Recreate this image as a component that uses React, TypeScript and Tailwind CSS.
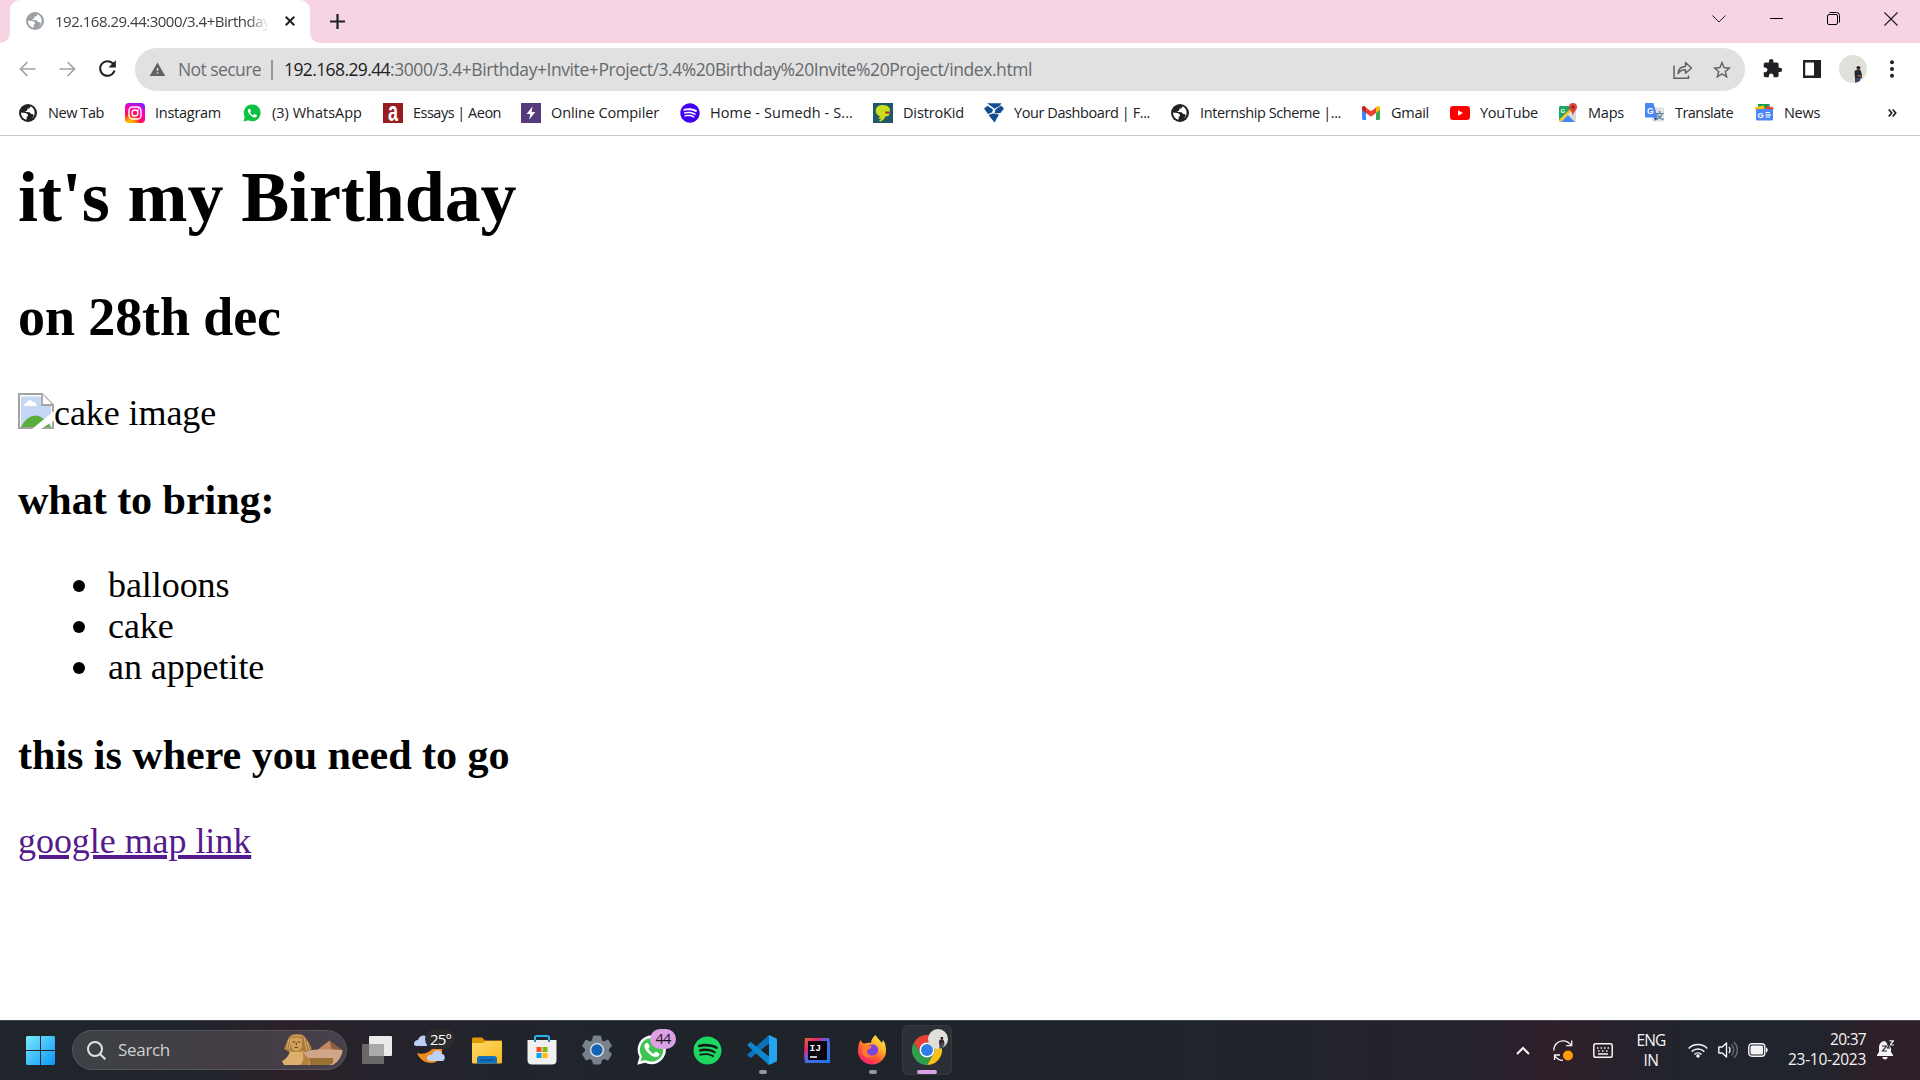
import { useLayoutEffect, useRef, useState, type ReactNode } from "react";
import { MdExtension, MdRefresh, MdStarBorder, MdWarning } from "react-icons/md";
import { FaSpotify } from "react-icons/fa";

/* Text whose letter spacing is tuned so that it fills a given width. */
function FitText({ children, width, className = "" }: { children: string; width: number; className?: string }) {
  const ref = useRef<HTMLSpanElement>(null);
  const [spacing, setSpacing] = useState(0);
  useLayoutEffect(() => {
    const el = ref.current;
    if (!el) return;
    el.style.letterSpacing = "0px";
    const natural = el.getBoundingClientRect().width;
    setSpacing((width - natural) / children.length);
  }, [children, width]);
  return (
    <span ref={ref} className={"inline-block whitespace-pre " + className} style={{ letterSpacing: spacing + "px" }}>
      {children}
    </span>
  );
}

function Globe({ color }: { color: string }) {
  return (
    <svg width="18" height="18" viewBox="0 0 18 18">
      <circle cx="9" cy="9" r="9" fill={color} />
      <path
        d="M11.2 2.3c.3 1.3-.5 2.2-1.7 2.3-.9 0-1.2.5-1.2 1.2 0 .9-.5 1.2-1.4 1.3-.5 0-.7.6-.2.9.8.2 2.9 0 3.8.3 1.2.4 1 1.5 1.9 1.8.9.3 2.1-.1 2.2.9.1 1-.8 2.7-1.9 3.7a7 7 0 0 0 2.9-5.9A7 7 0 0 0 11.2 2.3z"
        fill="#fff"
      />
      <path d="M2 8.6c1.6.3 3.900.3 5.100.7 1.300.5 2.100 1.200 1.900 2.200-.2.900-1.200.9-1.300 1.800-.1.900.2 1.600-.4 2.400C4.100 15 1.900 12 2 8.600z" fill="#fff" />
    </svg>
  );
}

function InstagramIcon() {
  return (
    <svg width="20" height="20" viewBox="0 0 20 20">
      <defs>
        <radialGradient id="ig" cx=".25" cy="1.05" r="1.15">
          <stop offset="0" stopColor="#ffd600" />
          <stop offset=".22" stopColor="#ff9b00" />
          <stop offset=".45" stopColor="#ff0f55" />
          <stop offset=".72" stopColor="#ff00b4" />
          <stop offset="1" stopColor="#8a1cff" />
        </radialGradient>
      </defs>
      <rect width="20" height="20" rx="4" fill="url(#ig)" />
      <g fill="none" stroke="#fff" strokeWidth="1.400">
        <rect x="4" y="4" width="12" height="12" rx="3.600" />
        <circle cx="10" cy="10" r="3" />
      </g>
      <circle cx="13.500" cy="6.500" r=".9" fill="#fff" />
    </svg>
  );
}

const PHONE =
  "M6.200 4.700c-.4 0-1.300.5-1.400 1.900 0 1.400.9 2.800 2.200 4.200 1.500 1.600 3.300 2.600 4.900 2.600 1.300-.1 2.100-1 2.100-1.900 0-.4-2-1.500-2.400-1.400-.4 0-.9 1.200-1.300 1.200-.7-.1-3-2.200-3.100-2.900 0-.4.8-.9.800-1.300 0-.5-.8-2.400-1.800-2.400z";

function WhatsAppIcon() {
  return (
    <svg width="18" height="18" viewBox="0 0 18 18">
      <path d="M9.100.4a8.400 8.400 0 0 0-7.300 12.500L.5 17.600l4.900-1.300A8.400 8.400 0 1 0 9.100.4z" fill="#0cc143" />
      <path d={PHONE} fill="#fff" />
    </svg>
  );
}

function AeonIcon() {
  return (
    <svg width="20" height="20" viewBox="0 0 20 20" overflow="visible">
      <rect width="20" height="20" fill="#971d23" />
      <text
        x="5"
        y="17.500"
        fontSize="27"
        fontWeight="700"
        fill="#fff"
        fontFamily="Liberation Sans, sans-serif"
        textLength="10"
        lengthAdjust="spacingAndGlyphs"
      >
        a
      </text>
    </svg>
  );
}

function CompilerIcon() {
  return (
    <svg width="20" height="20" viewBox="0 0 20 20">
      <rect width="20" height="20" fill="#553b7c" />
      <path d="M11.500 3.500 5.500 11h3.700l-1 5.800 6.100-7.900h-3.600z" fill="#fff" />
    </svg>
  );
}

function DistroIcon() {
  return (
    <svg width="20" height="20" viewBox="0 0 20 20">
      <rect width="20" height="20" fill="#22566a" />
      <path d="M2.800 6.500C3.600 3 7 1.700 10.500 2c4 .2 6.600 2.500 6.500 5.500l-.8 4.500c-.8 1.500-2.500 1.500-4 1.500l-1 2.500-3.200 2.500-2-.5 2.200-2.500-2.900.3 1.500-2.300L4 11.500C2.800 10 2.500 8 2.800 6.500z" fill="#c9de1c" />
      <path d="M12 8.500h4.500v2h-4z" fill="#b5242c" />
    </svg>
  );
}

function DashboardIcon() {
  return (
    <svg width="20" height="20" viewBox="0 0 20 20" fill="#134f8f">
      <path d="M3 .3h14.500L15.500 3 10.500 5.800 6.500 2.800z" />
      <path d="M0 5.500 3.500 2.800 9 6.500 8 9.500 4 11z" />
      <path d="M11.500 6.500 17 2.500l3 3-3.500 4.500-6 .5z" />
      <path d="M4.500 12 9 10.500l6 1L10.500 19.500z" />
    </svg>
  );
}

function GmailIcon() {
  return (
    <svg width="18" height="14" viewBox="0 0 18 14">
      <path d="M0 2.200V12.800c0 .7.500 1.200 1.200 1.200H4V6z" fill="#4285f4" />
      <path d="M18 2.200V12.800c0 .7-.5 1.200-1.200 1.200H14V6z" fill="#34a853" />
      <path d="M14 1.600V7l4-3V2c0-1.900-2-2.400-3.200-1.400z" fill="#fbbc04" />
      <path d="M4 7V1.600l5 3.700 5-3.700V7l-5 3.800z" fill="#ea4335" />
      <path d="M0 2v2l4 3V1.600L3.200.6C2-.4 0 .1 0 2z" fill="#c5221f" />
    </svg>
  );
}

function YouTubeIcon() {
  return (
    <svg width="20" height="14" viewBox="0 0 20 14">
      <rect width="20" height="14" rx="3.200" fill="#f00" />
      <path d="M8 4.200v5.600L13 7z" fill="#fff" />
    </svg>
  );
}

function MapsIcon() {
  return (
    <svg width="18" height="20" viewBox="0 0 18 20">
      <rect x="0" y="3" width="17" height="16" rx="1.500" fill="#e6e6e6" />
      <path d="M0 17V4.500C0 3.700.7 3 1.500 3H15L0 17.500z" fill="#1fa463" />
      <path d="M2 19 9 12l7 7z" fill="#4285f4" />
      <path d="M0 17 14 3l2.500 1L1.500 19C.5 19 0 18 0 17z" fill="#f7c52b" />
      <path d="M9.500 12.500 16.500 19c.5-.4.5-1 .5-1.500V6z" fill="#d9d9d9" />
      <text x="1.500" y="9.500" fontSize="6" fontWeight="700" fill="#fff" fontFamily="Liberation Sans, sans-serif">G</text>
      <path d="M14 0a4 4 0 0 0-4 4c0 3.500 3.400 4 4 9 .6-5 4-5.500 4-9a4 4 0 0 0-4-4z" fill="#e04538" />
      <circle cx="14" cy="4" r="1.500" fill="#8c1d18" />
    </svg>
  );
}

function TranslateIcon() {
  return (
    <svg width="20" height="19" viewBox="0 0 20 19">
      <rect x="7" y="4.500" width="12" height="14" rx="1" fill="#dfe1e5" />
      <text x="10" y="15.500" fontSize="9" fontWeight="700" fill="#5f7f95" fontFamily="Noto Sans CJK SC, sans-serif">文</text>
      <path d="M1 0h7.500l4 14.500H1c-.6 0-1-.4-1-1V1c0-.6.4-1 1-1z" fill="#4a87f2" />
      <path d="M9 14.500h3.500L9.800 18z" fill="#2a56c6" />
      <text x="2" y="10.500" fontSize="8.500" fontWeight="700" fill="#fff" fontFamily="Liberation Sans, sans-serif">G</text>
    </svg>
  );
}

function NewsIcon() {
  return (
    <svg width="19" height="17" viewBox="0 0 19 17">
      <path d="M3 0h11.500v6H3z" fill="#0c9d58" />
      <path d="m0 3 9-1.500 1 6L1 9z" fill="#ffc107" />
      <path d="m18.500 3.500-7-1.800-1.500 6L17.500 10z" fill="#ea4335" />
      <rect x="1" y="5" width="17" height="11.500" rx="1.200" fill="#4a87f2" />
      <text x="2.500" y="14" fontSize="8" fontWeight="700" fill="#fff" fontFamily="Liberation Sans, sans-serif">G</text>
      <path d="M10.500 8.500H15M10.500 10.800H16M10.500 13H15" stroke="#fff" strokeWidth="1.200" />
    </svg>
  );
}

type Bookmark = { label: string; slot: string; width: number; icon: ReactNode };

const bookmarks: Bookmark[] = [
  { label: "New Tab", slot: "w-[107px]", width: 56, icon: <Globe color="#202124" /> },
  { label: "Instagram", slot: "w-[117px]", width: 66, icon: <InstagramIcon /> },
  { label: "(3) WhatsApp", slot: "w-[141px]", width: 90, icon: <WhatsAppIcon /> },
  { label: "Essays | Aeon", slot: "w-[138px]", width: 88, icon: <AeonIcon /> },
  { label: "Online Compiler", slot: "w-[159px]", width: 108, icon: <CompilerIcon /> },
  { label: "Home - Sumedh - S...", slot: "w-[193px]", width: 143, icon: <FaSpotify size={20} color="#4100f5" /> },
  { label: "DistroKid", slot: "w-[111px]", width: 61, icon: <DistroIcon /> },
  { label: "Your Dashboard | F...", slot: "w-[186px]", width: 136, icon: <DashboardIcon /> },
  { label: "Internship Scheme |...", slot: "w-[191px]", width: 141, icon: <Globe color="#202124" /> },
  { label: "Gmail", slot: "w-[89px]", width: 38, icon: <GmailIcon /> },
  { label: "YouTube", slot: "w-[108px]", width: 58, icon: <YouTubeIcon /> },
  { label: "Maps", slot: "w-[87px]", width: 36, icon: <MapsIcon /> },
  { label: "Translate", slot: "w-[109px]", width: 58, icon: <TranslateIcon /> },
  { label: "News", slot: "w-[80px]", width: 36, icon: <NewsIcon /> },
];

function TabStrip() {
  return (
    <div className="flex h-[43px] bg-[#f6d4e3]">
      <div className="flex w-2.5 items-end bg-white">
        <div className="h-full w-full rounded-br-[10px] bg-[#f6d4e3]" />
      </div>
      <div className="bg-[#f6d4e3]">
        <div className="flex h-[43px] w-[300px] items-center rounded-t-[10px] bg-white pb-[2px] pl-4">
          <Globe color="#9aa0a6" />
          <div className="ml-[11px] w-[216px] [mask-image:linear-gradient(90deg,#000_192px,transparent_214px)]">
            <FitText width={215} className="text-[15px] leading-5 text-[#3c4043]">
              192.168.29.44:3000/3.4+Birthday
            </FitText>
          </div>
          <svg className="ml-3.5" width="10" height="10" viewBox="0 0 10 10" stroke="#202124" strokeWidth="2">
            <path d="M.7.700l8.600 8.600M9.300.7.7 9.300" />
          </svg>
        </div>
      </div>
      <div className="flex w-2.5 items-end bg-white">
        <div className="h-full w-full rounded-bl-[10px] bg-[#f6d4e3]" />
      </div>
      <svg className="mt-3.5 ml-2.5" width="15" height="15" viewBox="0 0 15 15" stroke="#202124" strokeWidth="2.200">
        <path d="M7.500 0v15M0 7.500h15" />
      </svg>
      <div className="mr-[22px] ml-auto flex h-[37px] items-center gap-11">
        <svg width="14" height="13" viewBox="0 0 14 13" fill="none" stroke="#202124">
          <path d="m.5 3.500 6.500 6.500 6.500-6.500" />
        </svg>
        <svg width="13" height="13" viewBox="0 0 13 13" fill="none" stroke="#000">
          <path d="M0 6.500h13" />
        </svg>
        <svg width="13" height="13" viewBox="0 0 13 13" fill="none" stroke="#000">
          <rect x=".5" y="2.500" width="10" height="10" rx="1.500" />
          <path d="M2.500.500h7a3 3 0 0 1 3 3v7" />
        </svg>
        <svg width="14" height="14" viewBox="0 0 14 14" fill="none" stroke="#202124" strokeWidth="1.200">
          <path d="m.5.500 13 13M13.500.500l-13 13" />
        </svg>
      </div>
    </div>
  );
}

function Avatar({ className }: { className: string }) {
  return (
    <svg className={className} viewBox="0 0 28 28">
      <circle cx="14" cy="14" r="14" fill="#e0e0da" />
      <path d="M15.500 16.500c.5-2 5.500-2.500 6.500-.5l1 4-.5 3.500h-6.500z" fill="#2b2632" />
      <circle cx="19.500" cy="13.500" r="1.800" fill="#5b3a30" />
      <path d="M17.300 13c.3-2.500 4-2.500 4.300 0z" fill="#17151a" />
      <path d="m18.500 20 4 .5-1 1.300-3-.5z" fill="#a36d5a" />
      <path d="M16 23h5.500l-.5 2.800-2 1.200-3 .7z" fill="#3a4664" />
    </svg>
  );
}

function Toolbar() {
  return (
    <div className="flex h-[53px] items-center bg-white">
      <svg className="mb-0.5 ml-[19px]" width="17" height="16" viewBox="0 0 17 16" fill="none" stroke="#a2a2a2" strokeWidth="1.700">
        <path d="M16.500 8H1.500M8.500 1l-7 7 7 7" />
      </svg>
      <svg className="mb-0.5 ml-[23px]" width="17" height="16" viewBox="0 0 17 16" fill="none" stroke="#a2a2a2" strokeWidth="1.700">
        <path d="M.5 8h15M8.500 1l7 7-7 7" />
      </svg>
      <MdRefresh className="mb-0.5 ml-[19px] text-[#202124]" size={25} />
      <div className="ml-[15px] flex h-[43px] w-[1610px] items-center rounded-full bg-[#e1e1e1] text-[17.500px]">
        <MdWarning className="ml-3.5 text-[#5f6368]" size={17} />
        <FitText width={83} className="ml-3 text-[#6b6e72]">Not secure</FitText>
        <div className="ml-2.5 h-5 w-0.5 bg-[#96999c]" />
        <FitText width={106} className="ml-[11px] text-[#202124]">192.168.29.44</FitText>
        <FitText width={642} className="text-[#666a6e]">
          :3000/3.4+Birthday+Invite+Project/3.4%20Birthday%20Invite%20Project/index.html
        </FitText>
        <svg className="ml-auto" width="20" height="18" viewBox="0 0 20 18" fill="none" stroke="#5f6368" strokeWidth="1.500">
          <path d="M1 4.500v12.700h14.500V14.500" />
          <path d="M5 12.500c.3-4 2.700-6.800 7.500-7V1.500l6 5.500-6 5.300V8.700c-3.500 0-5.500 1-7.500 3.800z" strokeLinejoin="round" />
        </svg>
        <MdStarBorder className="mr-3 ml-[18px] text-[#5f6368]" size={22} />
      </div>
      <MdExtension className="mb-0.5 ml-[17px] text-[#202124]" size={21} />
      <svg className="mb-0.5 ml-5" width="18" height="18" viewBox="0 0 18 18">
        <path fillRule="evenodd" d="M0 0h18v18H0zM2.200 2.500v13h8.800v-13z" fill="#202124" />
      </svg>
      <Avatar className="mb-0.5 ml-[18px] h-7 w-7" />
      <svg className="mb-0.5 ml-[22px]" width="6" height="18" viewBox="0 0 6 18" fill="#202124">
        <circle cx="3" cy="2.300" r="2" />
        <circle cx="3" cy="9" r="2" />
        <circle cx="3" cy="15.700" r="2" />
      </svg>
    </div>
  );
}

function BookmarksBar() {
  return (
    <div className="flex h-10 items-center border-b border-[#c9c9c9] bg-white pb-1.5 pl-[18px] text-[14.500px] text-[#202124]">
      {bookmarks.map((b) => (
        <div key={b.label} className={"flex shrink-0 items-center " + b.slot}>
          <span className="mr-2.5 flex w-5 shrink-0 justify-center">{b.icon}</span>
          <FitText width={b.width}>{b.label}</FitText>
        </div>
      ))}
      <svg className="mr-[23px] ml-auto" width="9" height="8" viewBox="0 0 9 8" fill="none" stroke="#202124" strokeWidth="1.700">
        <path d="m.7.500 3 3.500-3 3.500M4.700.500l3 3.500-3 3.500" />
      </svg>
    </div>
  );
}

function BrokenImage() {
  return (
    <svg width="36" height="36" viewBox="0 0 36 36">
      <path d="M1 1h23l11 11V35H1z" fill="#fff" stroke="#a3a3a3" strokeWidth="2" />
      <path d="M3 3.500h20.500v9.500H33V34H3z" fill="#c5d7f4" />
      <path d="M6 13c-.5-2 1-3 2.500-3 .5-3 5-4 6.500-1 2.500-.5 4 1.500 3.500 4z" fill="#fff" />
      <path d="M3 34C7 26 13 22.500 17.500 22.500S27 26 33 34z" fill="#5bad3b" />
      <path d="M24 1v11h11" fill="#fff" stroke="#a3a3a3" strokeWidth="1.800" />
      <path d="M36 18v9.500L23 36H14z" fill="#fff" />
    </svg>
  );
}

function Bullet({ children }: { children: ReactNode }) {
  return (
    <li className="flex items-center">
      <span className="mr-[23px] h-3 w-3 rounded-full bg-black" />
      {children}
    </li>
  );
}

function Page() {
  return (
    <main className="h-[884px] bg-white pt-5 pl-[18px] font-['Liberation_Serif','Times_New_Roman',serif] text-[36px] leading-[41px] text-black">
      <h1 className="text-[72px] leading-[82px] font-bold tracking-[-0.1px]">it's my Birthday</h1>
      <h2 className="mt-[48px] text-[54px] leading-[62px] font-bold tracking-[-0.1px]">on 28th dec</h2>
      <div className="mt-[45px] flex h-[41px]">
        <BrokenImage />
        <span className="tracking-[-0.08px]">cake image</span>
      </div>
      <h3 className="mt-[42px] text-[42.120px] leading-[48px] font-bold tracking-[-0.06px]">what to bring:</h3>
      <ul className="mt-[41px] pl-[55px] tracking-[-0.06px]">
        <Bullet>balloons</Bullet>
        <Bullet>cake</Bullet>
        <Bullet>an appetite</Bullet>
      </ul>
      <h3 className="mt-[43px] text-[42.120px] leading-[48px] font-bold tracking-[-0.05px]">this is where you need to go</h3>
      <p className="mt-[42px] tracking-[-0.05px] text-[#551a8b]">
        <span className="underline decoration-[3.500px] underline-offset-[2px]">google map link</span>
      </p>
    </main>
  );
}

function Sphinx() {
  return (
    <svg width="61" height="32" viewBox="0 0 61 32">
      <path d="M34 17 47.500 6.500 61 17z" fill="#c08a5e" />
      <path d="M47.500 6.500 61 17H50z" fill="#8f5d40" />
      <path d="M22 17c12-2 26-2 38.500-1-.5 6-4 12-10 15H20z" fill="#cfa688" />
      <path d="M18 24h33v5l-4 2H16z" fill="#9c7033" />
      <path d="M9 1c5-1.800 11-1.200 13.500 1.500C26 6 28 11 30 15l-6 3H7l-5-3C4 11 5 4 9 1z" fill="#a87a3c" />
      <path d="M22 3l3 14M25 7l2.500 9M7 5 4.500 15M9 3 7 16M10 1.800h11" stroke="#dcb06c" strokeWidth="1" fill="none" />
      <path d="M9 5c2-2 9-2 11 0v6c0 4-3 6.500-5.500 6.500S9 15 9 11z" fill="#d2a059" />
      <path d="M10.500 8h2.700M15.700 8h2.700M12.700 13.500h3.400M14.300 8.500v2.700" stroke="#65431f" strokeWidth="1" />
      <path d="M8 16.500c2 2 10 2 13 0 1 4 5 6 7 9.500v5H2l-2-4c4-2 7-5 8-10.500z" fill="#dcb06c" />
      <path d="M20 17c2 4 6 5 8 9l-1 5h-9c4-4 4-9 2-14z" fill="#b5853f" />
    </svg>
  );
}

function Weather() {
  return (
    <div className="relative flex h-10 w-10 items-end">
      <svg width="40" height="40" viewBox="0 0 40 40">
        <path d="M5 23c5 2 12 0 15-4l10-1c1 8-3 15-11 15-6 0-12-4-14-10z" fill="#f08a1d" />
        <path d="M2 14c0-3 2-4 4-4 1-5 8-6 9-2v8H4c-1 0-2-1-2-2z" fill="#b9cdf5" />
        <path d="M15 28c0-3 3-4 5-3 1-6 9-6 10-1 3 0 4 5 1 7H18c-2 0-3-1-3-3z" fill="#bcd0f8" />
      </svg>
      <span className="absolute -top-px left-[13px] flex h-5 w-[30px] items-center justify-center rounded-full bg-[#2b2b2d] pl-px text-[15px] text-white">
        <FitText width={21}>25°</FitText>
      </span>
    </div>
  );
}

function Explorer() {
  return (
    <svg width="30" height="27" viewBox="0 0 30 27">
      <defs>
        <linearGradient id="fold" x1="0" y1="0" x2="1" y2="1">
          <stop offset="0" stopColor="#ffd869" />
          <stop offset="1" stopColor="#f9b91c" />
        </linearGradient>
      </defs>
      <path d="M0 2c0-1 .8-1.500 1.500-1.500H10l3 3h17V8H0z" fill="#dd9a05" />
      <path d="M0 6h11l3-2h14.500c1 0 1.500.7 1.500 1.500V25c0 1-.7 1.500-1.500 1.500h-27C.6 26.500 0 26 0 25z" fill="url(#fold)" />
      <path d="M5 26.500V22c0-2 1-3 3-3h14c2 0 3 1 3 3v4.500z" fill="#1272bd" />
      <path d="M8.500 23h13" stroke="#0a4a86" strokeWidth="1.200" />
    </svg>
  );
}

function Store() {
  return (
    <svg width="30" height="30" viewBox="0 0 30 30">
      <path d="M8 7V2.500C8 1.500 8.700 1 9.500 1h11c.9 0 1.500.6 1.500 1.500V7" fill="none" stroke="#28b5ec" strokeWidth="2" />
      <path d="M.5 5h29v20c0 3-1.500 4.500-4.500 4.500H5C2 29.500.5 28 .5 25z" fill="#f0f0f1" />
      <path d="M8 5v2M22 5v2" stroke="#1d86c2" strokeWidth="2" />
      <path d="M9.500 12h5v5h-5z" fill="#f25022" />
      <path d="M15.500 12h5v5h-5z" fill="#7fba00" />
      <path d="M9.500 18h5v5h-5z" fill="#00a4ef" />
      <path d="M15.500 18h5v5h-5z" fill="#ffb900" />
    </svg>
  );
}

function Settings() {
  return (
    <svg width="30" height="30" viewBox="0 0 30 30">
      <path d="M11.500 1h7l1 4.500 2.500 1.500L26 5l3.500 6-3 3v2l3 3L26 25l-4-1.500-2.500 1.500-1 4h-7l-1-4L8 23.500 4 25 .5 19l3-3v-2l-3-3L4 5l4 2 2.500-1.500z" fill="#77828d" strokeLinejoin="round" stroke="#77828d" />
      <circle cx="15" cy="15" r="7" fill="#e2e7eb" />
      <circle cx="15" cy="15" r="5.700" fill="#1464b4" />
    </svg>
  );
}

function WhatsAppApp() {
  return (
    <div className="relative">
      <svg width="30" height="30" viewBox="0 0 30 30">
        <path d="M15 .3A14.500 14.500 0 0 0 2.500 22L.2 29.800 8 27.800A14.500 14.500 0 1 0 15 .3z" fill="#fff" />
        <path d="M15 3A11.800 11.800 0 0 0 5 21.500L3.600 26.300 8.500 25A11.800 11.800 0 1 0 15 3z" fill="#3fc351" />
        <path d={PHONE} fill="#fff" transform="translate(-.5 0) scale(1.650)" />
      </svg>
      <span className="absolute -top-[6px] left-[13px] flex h-5 w-[26px] items-center justify-center rounded-full bg-[#dca0e4] text-[14.500px] text-[#17181c]">
        <FitText width={15}>44</FitText>
      </span>
    </div>
  );
}

function VSCode() {
  return (
    <svg width="30" height="30" viewBox="0 0 30 30">
      <path d="M22 0 1 19c-.7.600-.7 1.200 0 1.800l1.800 1.600c.5.400 1 .4 1.500 0L22 8.500z" fill="#0b73b8" />
      <path d="M22 30 1 11c-.7-.6-.7-1.200 0-1.800l1.800-1.600c.5-.4 1-.4 1.500 0L22 21.500z" fill="#0f85cc" />
      <path d="M22 0l7 3.300c.6.300 1 .8 1 1.500v20.400c0 .7-.4 1.200-1 1.500L22 30z" fill="#27a4f0" />
    </svg>
  );
}

function IntelliJ() {
  return (
    <svg width="27" height="27" viewBox="0 0 27 27">
      <defs>
        <linearGradient id="ij" x1="0" y1="0" x2="1" y2="1">
          <stop offset="0" stopColor="#f0672b" />
          <stop offset=".28" stopColor="#e6266e" />
          <stop offset=".45" stopColor="#5368df" />
          <stop offset="1" stopColor="#1778f0" />
        </linearGradient>
      </defs>
      <path d="M1 1h24l1 5v20H1l-1-8z" fill="url(#ij)" />
      <rect x="4" y="4" width="19" height="19" fill="#080510" />
      <text x="5.500" y="13.500" fontSize="9.500" fontWeight="700" fill="#fff" fontFamily="Liberation Mono, monospace">IJ</text>
      <path d="M6 20h7" stroke="#fff" strokeWidth="1.500" />
    </svg>
  );
}

function Firefox() {
  return (
    <svg width="30" height="30" viewBox="0 0 30 30">
      <defs>
        <linearGradient id="ff" x1=".85" y1="0" x2=".2" y2="1">
          <stop offset="0" stopColor="#fff14a" />
          <stop offset=".35" stopColor="#ffb22b" />
          <stop offset=".65" stopColor="#ff5634" />
          <stop offset="1" stopColor="#f5157c" />
        </linearGradient>
      </defs>
      <path d="M18.500 0c1.500 3 4.500 5 6.500 8l1-3c2.500 3 3 7 3 11a14 13.500 0 0 1-28 0C1 11 2 8 3.500 5l2 3 2.500.5c2-1 4-1 6-.5C14 5 16 2 18.500 0z" fill="url(#ff)" />
      <circle cx="15.500" cy="15" r="5.700" fill="#7b45e0" />
      <path d="M6 11c3-2 6 0 9 0l-2 3c-2 0-3 1-3 3 0 3 4 5 9 3-3 4-13 4-14-3z" fill="#ff7a2c" />
    </svg>
  );
}

function ChromeApp() {
  return (
    <div className="relative flex h-[50px] w-[50px] items-center justify-center rounded-md border border-[#363a40] bg-[#2b2f36]">
      <svg width="30" height="30" viewBox="0 0 30 30">
        <path d="M2 7.500A15 15 0 0 1 28 7.500H15A7.500 7.500 0 0 0 8.500 18.750z" fill="#ea4335" />
        <path d="M28 7.500A15 15 0 0 1 15 30l6.500-11.250A7.500 7.500 0 0 0 15 7.500z" fill="#fbc116" />
        <path d="M15 30A15 15 0 0 1 2 7.500l6.500 11.250a7.500 7.500 0 0 0 13 0z" fill="#2e9e4f" />
        <circle cx="15" cy="15" r="7.600" fill="#fff" />
        <circle cx="15" cy="15" r="6" fill="#2f7de9" />
      </svg>
      <Avatar className="absolute top-[3px] left-[25px] h-5 w-5" />
      <span className="absolute bottom-0 left-[14px] h-1 w-5 rounded-full bg-[#dca0e4]" />
    </div>
  );
}

function AppSlot({ children, running = false }: { children: ReactNode; running?: boolean }) {
  return (
    <div className="relative flex h-full w-[55px] shrink-0 items-center justify-center">
      {children}
      {running && <span className="absolute bottom-[5px] left-6 h-1 w-2 rounded-full bg-[#94979b]" />}
    </div>
  );
}

function Taskbar() {
  return (
    <footer className="flex h-[60px] items-center border-t border-[#45484d] bg-[linear-gradient(90deg,#20252b_0%,#20252b_10%,#2b202a_15%,#23232b_22%,#1f242b_32%,#1f242b_60%,#24222d_76%,#2e1f2a_81%,#20242c_88%,#20242c_94%,#2e1f29_98%)] pb-px">
      <svg className="ml-[26px]" width="29" height="29" viewBox="0 0 29 29">
        <defs>
          <linearGradient id="win" x1="0" y1="0" x2="1" y2="1">
            <stop offset="0" stopColor="#7cebfd" />
            <stop offset=".6" stopColor="#35b7fb" />
            <stop offset="1" stopColor="#0d96f8" />
          </linearGradient>
        </defs>
        <path d="M1 0h13v14H0V1zM15 0h13l1 1v13H15zM0 15h14v14H1l-1-1zM15 15h14v13l-1 1H15z" fill="url(#win)" />
      </svg>
      <div className="ml-[17px] flex h-10 w-[275px] items-center rounded-full border border-[#56565c] bg-[linear-gradient(90deg,#3c4145,#453d46_60%,#48404a)]">
        <svg className="ml-3.5" width="19" height="19" viewBox="0 0 19 19" fill="none" stroke="#e3e3e5" strokeWidth="2">
          <circle cx="8" cy="8" r="7" />
          <path d="m13 13 5.300 5.300" />
        </svg>
        <FitText width={52} className="ml-3 text-[17px] text-[#d0d0d3]">Search</FitText>
        <span className="mr-[3px] ml-auto">
          <Sphinx />
        </span>
      </div>
      <div className="ml-[2.500px] flex h-full items-center">
        <AppSlot>
          <svg width="30" height="28" viewBox="0 0 30 28">
            <rect x="7" y="0" width="23" height="20" rx="1" fill="#ebebeb" />
            <rect x="0" y="8" width="22" height="20" rx="1" fill="#686868" />
            <path d="M7 8h15v12H7z" fill="#aaa" />
          </svg>
        </AppSlot>
        <AppSlot>
          <Weather />
        </AppSlot>
        <AppSlot>
          <Explorer />
        </AppSlot>
        <AppSlot>
          <Store />
        </AppSlot>
        <AppSlot>
          <Settings />
        </AppSlot>
        <AppSlot>
          <WhatsAppApp />
        </AppSlot>
        <AppSlot>
          <span className="flex h-[29px] w-[29px] items-center justify-center rounded-full bg-[#151a1c]">
            <FaSpotify size={29} color="#1ed760" />
          </span>
        </AppSlot>
        <AppSlot running>
          <VSCode />
        </AppSlot>
        <AppSlot>
          <IntelliJ />
        </AppSlot>
        <AppSlot running>
          <Firefox />
        </AppSlot>
        <AppSlot>
          <ChromeApp />
        </AppSlot>
      </div>
      <div className="mr-[26px] ml-auto flex items-center text-[15.500px] leading-5 text-[#f4f4f5]">
        <svg width="14" height="9" viewBox="0 0 14 9" fill="none" stroke="currentColor" strokeWidth="2">
          <path d="m1 8 6-6 6 6" />
        </svg>
        <svg className="ml-[23px]" width="20" height="21" viewBox="0 0 20 21" fill="none" stroke="currentColor" strokeWidth="1.300">
          <path d="M.8 10.500C.8 4 5.500.7 10 .8c4 .1 6.500 2 8.200 4.700M18.700.5v5.200h-5.500M1.500 20v-5H7M1.500 15.300C3.500 18.500 6 20.300 10 20.300" />
          <circle cx="15" cy="15.500" r="5" fill="#ff9a05" stroke="none" />
        </svg>
        <svg className="ml-5" width="20" height="15" viewBox="0 0 20 15" fill="none" stroke="currentColor">
          <rect x=".8" y=".8" width="18.400" height="13.400" rx="1.800" strokeWidth="1.500" />
          <path d="M4 5h1.500M7.500 5H9M11 5h1.500M14.500 5H16M5 8h1.500M9 8h1.500M13 8h1.500M5 11h10" strokeWidth="1.500" />
        </svg>
        <div className="ml-6 flex w-7 flex-col items-center">
          <FitText width={29}>ENG</FitText>
          <FitText width={15}>IN</FitText>
        </div>
        <svg className="ml-[23px]" width="20" height="15" viewBox="0 0 20 15" fill="none" stroke="currentColor" strokeWidth="1.500">
          <path d="M.7 5.500a13 13 0 0 1 18.600 0M3.700 8.600a9 9 0 0 1 12.600 0M6.500 11.500a5 5 0 0 1 7 0" />
          <circle cx="10" cy="13" r="1.800" fill="currentColor" stroke="none" />
        </svg>
        <svg className="ml-2.5" width="20" height="18" viewBox="0 0 20 18" fill="none" stroke="currentColor" strokeWidth="1.400">
          <path d="M.8 6h3.400L8.500 2v14l-4.300-4H.8z" strokeLinejoin="round" />
          <path d="M11 6c1.300 1.500 1.300 4.500 0 6" />
          <path d="M13.500 3.500c3 3 3 8 0 11M16 1c4.500 4.500 4.500 11.500 0 16" stroke="#696970" />
        </svg>
        <svg className="ml-2.5" width="20" height="14" viewBox="0 0 20 14">
          <rect x=".8" y=".8" width="16" height="12.400" rx="3" fill="none" stroke="currentColor" strokeWidth="1.400" />
          <rect x="2.500" y="2.500" width="12.600" height="9" rx="1.500" fill="currentColor" />
          <path d="M18 4.500c2.300.5 2.300 4.500 0 5z" fill="currentColor" />
        </svg>
        <div className="mb-0.5 ml-5 flex flex-col items-end">
          <FitText width={36}>20:37</FitText>
          <FitText width={78}>23-10-2023</FitText>
        </div>
        <svg className="ml-[11px]" width="17" height="20" viewBox="0 0 17 20" fill="currentColor">
          <path d="M8 1C4 1 2 4 2 7.500V12L0 15v1h16v-1l-2-3V8z" />
          <path d="M5.300 17h5.500c-.5 3.300-5 3.300-5.500 0z" />
          <path d="M11.500 0H17v7h-3.500z" fill="#291f28" />
          <path d="M12.500.800h4L13 5h4" fill="none" stroke="currentColor" strokeWidth="1.200" />
          <path d="M5 6h4.500L5.500 11H10M10 4.500h2.500L10.500 8H13" fill="none" stroke="#291f28" strokeWidth="1.200" />
        </svg>
      </div>
    </footer>
  );
}

export default function App() {
  return (
    <div className="flex h-[1080px] w-[1920px] flex-col overflow-hidden bg-white font-['Open_Sans','Noto_Sans',sans-serif]">
      <TabStrip />
      <Toolbar />
      <BookmarksBar />
      <Page />
      <Taskbar />
    </div>
  );
}
